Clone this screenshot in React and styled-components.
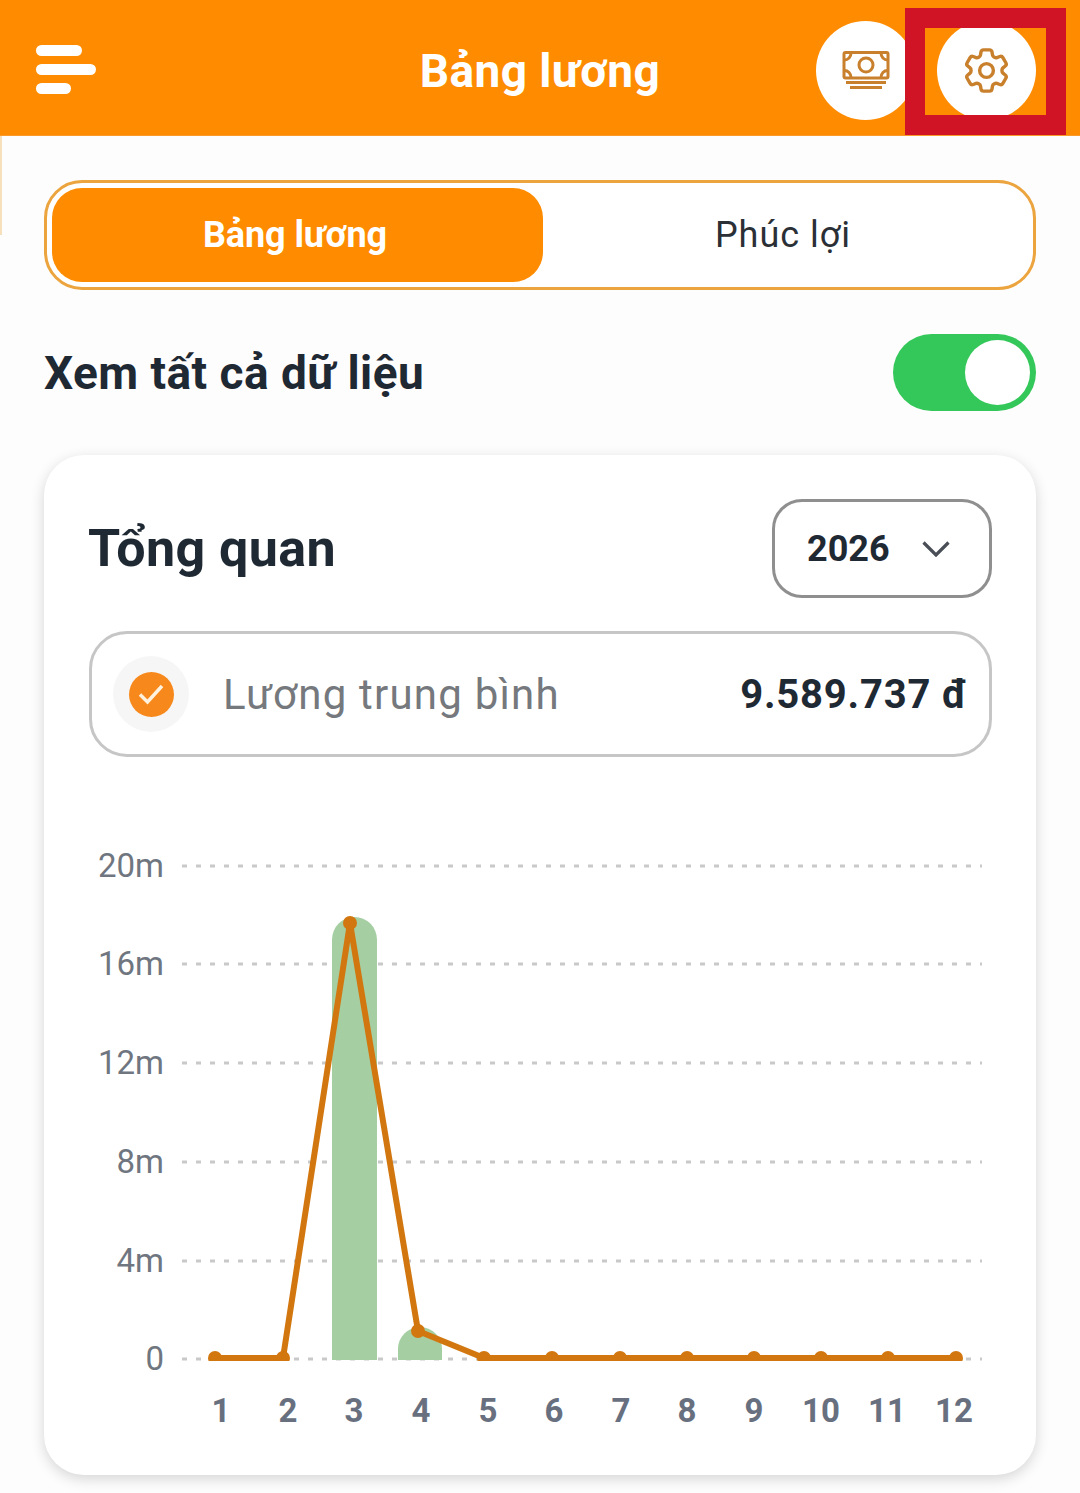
import styled, { createGlobalStyle } from "styled-components";
import { HiOutlineCog6Tooth } from "react-icons/hi2";

const GlobalStyle = createGlobalStyle`
  html, body {
    margin: 0;
    padding: 0;
    background: #fdfdfd;
    font-family: Roboto, "Noto Sans", sans-serif;
  }
  * { box-sizing: border-box; }
`;

const Page = styled.div`
  position: relative;
  width: 1080px;
  height: 1493px;
  overflow: hidden;
  background: #fdfdfd;
`;

const Header = styled.header`
  position: relative;
  height: 136px;
  display: flex;
  align-items: center;
  justify-content: space-between;
  padding: 0 44px 0 36px;
  background: #ff8c00;
  border-bottom: 1px solid #fa9a2a;
`;

const MenuButton = styled.div`
  width: 60px;
  display: flex;
  flex-direction: column;
  gap: 8px;
  margin-top: 4px;
`;

const MenuBar = styled.span`
  display: block;
  width: ${p => p.$w}px;
  height: 11px;
  border-radius: 6px;
  background: #fff;
`;

const HeaderTitle = styled.h1`
  position: absolute;
  left: 0;
  right: 0;
  top: 43px;
  margin: 0;
  text-align: center;
  font-size: 46px;
  line-height: 56px;
  font-weight: 700;
  letter-spacing: 0.4px;
  color: #fff;
`;

const HeaderActions = styled.div`
  display: flex;
  gap: 22px;
  margin-top: 5px;
`;

const RoundButton = styled.div`
  width: 99px;
  height: 99px;
  border-radius: 50%;
  display: flex;
  align-items: center;
  justify-content: center;
  background: #fff;
  color: #c9802c;
`;

const Highlight = styled.div`
  position: absolute;
  left: 905px;
  top: 8px;
  width: 161px;
  height: 127px;
  border: 20px solid #d01426;
`;

const EdgeLine = styled.div`
  position: absolute;
  left: 0;
  top: 136px;
  width: 2px;
  height: 99px;
  background: #f6dfbb;
`;

const Content = styled.main`
  padding: 44px 44px 0;
`;

const Tabs = styled.div`
  height: 110px;
  padding: 5px;
  display: grid;
  grid-template-columns: 491px 1fr;
  border: 3px solid #eca43f;
  border-radius: 38px;
  background: #fff;
`;

const Tab = styled.div`
  display: flex;
  align-items: center;
  justify-content: center;
  padding-right: 5px;
  border-radius: 30px;
  font-size: 36px;
  font-weight: ${p => (p.$active ? 700 : 400)};
  letter-spacing: ${p => (p.$active ? "-0.1px" : "1px")};
  color: ${p => (p.$active ? "#fff" : "#2b2f36")};
  background: ${p => (p.$active ? "#ff8c00" : "transparent")};
`;

const ToggleRow = styled.div`
  height: 77px;
  margin-top: 44px;
  display: flex;
  align-items: center;
  justify-content: space-between;
`;

const ToggleLabel = styled.div`
  font-size: 46px;
  font-weight: 700;
  letter-spacing: 0.45px;
  color: #1f2933;
`;

const Toggle = styled.div`
  width: 143px;
  height: 77px;
  padding: 6px;
  display: flex;
  justify-content: flex-end;
  border-radius: 39px;
  background: #34c759;
`;

const ToggleThumb = styled.span`
  width: 65px;
  height: 65px;
  border-radius: 50%;
  background: #fff;
`;

const Card = styled.section`
  height: 1020px;
  margin-top: 44px;
  padding: 44px 44px 0;
  border-radius: 40px;
  background: #fff;
  box-shadow: 0 4px 14px rgba(0, 0, 0, 0.16);
`;

const CardHead = styled.div`
  display: flex;
  align-items: center;
  justify-content: space-between;
`;

const CardTitle = styled.h2`
  margin: 0;
  font-size: 52px;
  font-weight: 700;
  letter-spacing: 0.4px;
  color: #1f2933;
`;

const YearSelect = styled.div`
  width: 220px;
  height: 99px;
  padding: 0 39px 0 32px;
  display: flex;
  align-items: center;
  justify-content: space-between;
  border: 3px solid #8f8f8f;
  border-radius: 30px;
  font-size: 36px;
  font-weight: 700;
  color: #1f2933;
`;

const StatRow = styled.div`
  height: 126px;
  margin: 33px 0 0 1px;
  padding: 0 21px 0 21px;
  display: flex;
  align-items: center;
  border: 3px solid #c6c6c6;
  border-radius: 38px;
`;

const StatHalo = styled.div`
  width: 76px;
  height: 76px;
  display: flex;
  align-items: center;
  justify-content: center;
  border-radius: 50%;
  background: #f6f6f6;
`;

const StatDot = styled.div`
  width: 45px;
  height: 45px;
  display: flex;
  align-items: center;
  justify-content: center;
  border-radius: 50%;
  background: #f7891c;
`;

const StatLabel = styled.div`
  margin-left: 34px;
  flex: 1;
  font-size: 42px;
  letter-spacing: 1.2px;
  color: #75787c;
`;

const StatValue = styled.div`
  font-size: 40px;
  font-weight: 700;
  letter-spacing: 0.8px;
  color: #1f2933;
`;

const Chart = styled.svg`
  display: block;
  margin: 80px 0 0 -44px;
  overflow: visible;
`;

const AxisY = styled.text`
  font-size: 33px;
  fill: #6f7680;
  text-anchor: end;
`;

const AxisX = styled.text`
  font-size: 33px;
  font-weight: 700;
  fill: #687080;
  text-anchor: middle;
`;

// page y of the chart svg top, so the numbers below read as screenshot coordinates
const TOP = 837;
const LEFT = 44;
const px = x => x - LEFT;
const py = y => y - TOP;

const GRID = [["20m", 866], ["16m", 964], ["12m", 1063], ["8m", 1162], ["4m", 1261], ["0", 1359]];
const POINTS = [
  [215, 1358], [283, 1358], [350, 923], [418, 1331], [484, 1358], [552, 1358],
  [620, 1358], [687, 1358], [754, 1358], [821, 1358], [888, 1358], [956, 1358],
];
const LABEL_X = [221, 288, 354, 421, 488, 554, 621, 687, 754, 821, 887, 954];

function barPath(left, right, top, bottom) {
  const r = (right - left) / 2;
  const h = Math.min(r, bottom - top);
  return `M${px(left)} ${py(bottom)}V${py(top + h)}A${r} ${h} 0 0 1 ${px(right)} ${py(top + h)}V${py(bottom)}Z`;
}

function SalaryChart() {
  return (
    <Chart width="992" height="600" viewBox="0 0 992 600">
      <defs>
        <clipPath id="plot">
          <rect x="0" y="0" width="992" height={py(1361)} />
        </clipPath>
      </defs>
      {GRID.map(([label, y]) => (
        <g key={label}>
          <AxisY x={px(164)} y={py(y) + 11}>{label}</AxisY>
          <line
            x1={px(182)} x2={px(982)} y1={py(y)} y2={py(y)}
            stroke="#c9c9c9" strokeWidth="3" strokeDasharray="5 9"
          />
        </g>
      ))}
      <path d={barPath(332, 377, 917, 1360)} fill="#a5cfa3" />
      <path d={barPath(398, 442, 1327, 1360)} fill="#a5cfa3" />
      <g clipPath="url(#plot)">
        <polyline
          points={POINTS.map(([x, y]) => `${px(x)},${py(y)}`).join(" ")}
          fill="none" stroke="#d2770f" strokeWidth="6" strokeLinejoin="round"
        />
        {POINTS.map(([x, y]) => (
          <circle key={x} cx={px(x)} cy={py(y)} r="7" fill="#d2770f" />
        ))}
      </g>
      {LABEL_X.map((x, i) => (
        <AxisX key={x} x={px(x)} y={py(1422)}>{i + 1}</AxisX>
      ))}
    </Chart>
  );
}

function MoneyIcon() {
  return (
    <svg width="48" height="38" viewBox="0 0 48 38" fill="none" stroke="#c9802c" strokeWidth="3">
      <rect x="2" y="1.5" width="44" height="25.5" rx="1.5" />
      <circle cx="24" cy="14" r="7" />
      <path d="M2.5 9C6 9 9 6 9 2M45.5 9C42 9 39 6 39 2M2.5 19.5C6 19.5 9 22.5 9 26.5M45.5 19.5C42 19.5 39 22.5 39 26.5" />
      <path d="M4 31.5H44M8 36.5H40" />
    </svg>
  );
}

export default function App() {
  return (
    <Page>
      <GlobalStyle />
      <Header>
        <MenuButton>
          <MenuBar $w={46} />
          <MenuBar $w={60} />
          <MenuBar $w={35} />
        </MenuButton>
        <HeaderTitle>Bảng lương</HeaderTitle>
        <HeaderActions>
          <RoundButton><MoneyIcon /></RoundButton>
          <RoundButton><HiOutlineCog6Tooth size={55} strokeWidth={1.5} /></RoundButton>
        </HeaderActions>
        <Highlight />
      </Header>
      <EdgeLine />
      <Content>
        <Tabs>
          <Tab $active>Bảng lương</Tab>
          <Tab>Phúc lợi</Tab>
        </Tabs>
        <ToggleRow>
          <ToggleLabel>Xem tất cả dữ liệu</ToggleLabel>
          <Toggle><ToggleThumb /></Toggle>
        </ToggleRow>
        <Card>
          <CardHead>
            <CardTitle>Tổng quan</CardTitle>
            <YearSelect>
              2026
              <svg width="28" height="16" viewBox="0 0 28 16" fill="none" stroke="#4a4f57" strokeWidth="3.2">
                <path d="M1.5 1.5L14 14L26.5 1.5" />
              </svg>
            </YearSelect>
          </CardHead>
          <StatRow>
            <StatHalo>
              <StatDot>
                <svg width="26" height="22" viewBox="0 0 26 22" fill="none" stroke="#fff3e0" strokeWidth="3.4">
                  <path d="M2 11.5L9.5 19L24 3" />
                </svg>
              </StatDot>
            </StatHalo>
            <StatLabel>Lương trung bình</StatLabel>
            <StatValue>9.589.737 đ</StatValue>
          </StatRow>
          <SalaryChart />
        </Card>
      </Content>
    </Page>
  );
}
